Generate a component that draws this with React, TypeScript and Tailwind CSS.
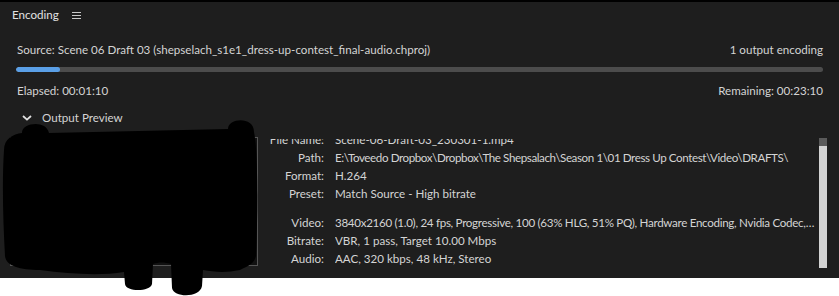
const details: { label: string; value: string; gap?: boolean; tight?: string }[] = [
  { label: "File Name:", value: "Scene-06-Draft-03_230301-1.mp4" },
  {
    label: "Path:",
    value: "E:\\Toveedo Dropbox\\Dropbox\\The Shepsalach\\Season 1\\01 Dress Up Contest\\Video\\DRAFTS\\",
    tight: "tracking-[-0.4px]",
  },
  { label: "Format:", value: "H.264" },
  { label: "Preset:", value: "Match Source - High bitrate" },
  {
    label: "Video:",
    value: "3840x2160 (1.0), 24 fps, Progressive, 100 (63% HLG, 51% PQ), Hardware Encoding, Nvidia Codec,…",
    gap: true,
    tight: "tracking-[-0.3px]",
  },
  { label: "Bitrate:", value: "VBR, 1 pass, Target 10.00 Mbps" },
  { label: "Audio:", value: "AAC, 320 kbps, 48 kHz, Stereo" },
];

export default function App() {
  return (
    <div
      className="relative w-[839px] h-[296px] bg-white overflow-hidden text-[11.6px] text-[#d4d4d4]"
      style={{ fontFamily: "Lato, 'Noto Sans', sans-serif" }}
    >
      <div className="h-[278px] bg-[#1e1e1e] border-t-2 border-black">
        {/* panel header */}
        <div className="h-[26px] flex items-center pl-[12px] gap-[13px] text-[#e2e2e2]">
          <span>Encoding</span>
          <svg width="9" height="8" viewBox="0 0 9 8" className="mt-[2px]">
            <path d="M0 0.5H9M0 3.5H9M0 6.5H9" stroke="#c8c8c8" strokeWidth="1" />
          </svg>
        </div>

        <div className="px-[16px]">
          <div className="mt-[14px] h-[16px] flex items-center justify-between">
            <span className="pl-[1px]">Source: Scene 06 Draft 03 (shepselach_s1e1_dress-up-contest_final-audio.chproj)</span>
            <span>1 output encoding</span>
          </div>

          <div className="mt-[9px] h-[5px] rounded-full bg-[#4c4c4c] overflow-hidden">
            <div className="h-full w-[44px] rounded-full bg-[#5a9fe6]" />
          </div>

          <div className="mt-[11px] h-[16px] flex items-center justify-between">
            <span className="pl-[1px]">Elapsed: 00:01:10</span>
            <span>Remaining: 00:23:10</span>
          </div>

          <div className="mt-[11px] h-[16px] flex items-center gap-[10px] pl-[6px]">
            <svg width="10" height="6" viewBox="0 0 10 6">
              <path d="M1 1L5 4.6L9 1" stroke="#e0e0e0" strokeWidth="1.8" fill="none" />
            </svg>
            <span>Output Preview</span>
          </div>
        </div>

        {/* output details */}
        <div className="mt-[11px] flex pl-[10px] pr-[12px]">
          <div className="w-[248px] h-[129px] border border-[#555] bg-[#111]" />
          <div className="flex-1 h-[129px] mt-[2px] overflow-hidden">
            <div className="-mt-[8px] grid grid-cols-[66px_1fr] gap-x-[11px]">
              {details.map((d) => (
                <div key={d.label} className="contents">
                  <div className={`h-[18px] flex items-center justify-end whitespace-nowrap ${d.gap ? "mt-[11px]" : ""}`}>
                    {d.label}
                  </div>
                  <div
                    className={`h-[18px] flex items-center whitespace-nowrap overflow-hidden pr-[8px] ${d.gap ? "mt-[11px]" : ""} ${d.tight ?? ""}`}
                  >
                    {d.value}
                  </div>
                </div>
              ))}
            </div>
          </div>
          <div className="w-[8px] h-[130px] mt-[1px] flex flex-col">
            <div className="h-[8px] bg-[#5a5a5a]" />
            <div className="flex-1 bg-[#d3d3d3]" />
          </div>
        </div>
      </div>

      {/* redaction scribble over the thumbnail */}
      <svg
        className="absolute left-0 top-[115px]"
        width="270"
        height="181"
        viewBox="0 115 270 181"
      >
        <path
          fill="#000"
          d="M4 150 C4 139 13 134 22 133 C21 123 46 119 49 133 L228 129 C228 118 254 116 254 132 C258 150 258 210 256 256 C254 264 248 266 240 270 C226 273 214 272 203 270 L202 286 C200 298 174 298 172 288 L171 264 C165 262 158 262 153 264 L152 284 C150 292 126 292 125 284 L124 272 C100 276 70 274 40 270 C20 270 6 266 5 256 C3 220 2 180 4 150 Z"
        />
      </svg>
    </div>
  );
}
